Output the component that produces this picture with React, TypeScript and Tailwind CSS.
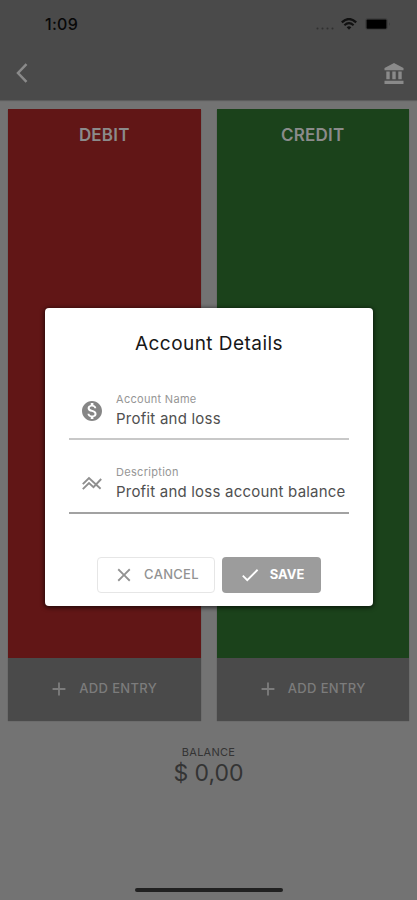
import { MdAdd, MdCheck, MdClose, MdMonetizationOn } from "react-icons/md";

const columns = [
	{ id: 1, title: "DEBIT", color: "bg-[#611616]" },
	{ id: 2, title: "CREDIT", color: "bg-[#1b421b]" },
];

const BankIcon = () => (
	<svg viewBox="0 0 19 21" className="w-5 h-[21px]" fill="currentColor">
		<path d="M1.800 8.600v7.600h3.400V8.600H1.800zm6 0v7.600h3.400V8.600H7.800zM0 21h19v-3.200H0V21zM13.800 8.600v7.600h3.400V8.600h-3.400zM9.500 0L0 5v2.200h19V5L9.500 0z" />
	</svg>
);

const ChartIcon = () => (
	<svg
		viewBox="0 0 20 16"
		className="w-5 h-4"
		fill="none"
		stroke="currentColor"
		strokeWidth="1.9"
	>
		<path d="M0.8 9.200L7 3L18.600 13.800" />
		<path d="M0.8 14.200L7 8L11.500 12.200L19.200 4" />
	</svg>
);

const StatusBar = () => (
	<div className="h-[46px] pl-[45px] pr-[26px] flex items-center justify-between text-[#080808]">
		<span className="text-[16px] font-medium leading-5 mt-px tracking-[0.3px]">
			1:09
		</span>
		<div className="flex items-center mt-[2px]">
			<svg viewBox="0 0 18 3" className="w-[18px] h-[3px] mt-2 mr-[7px]">
				<g fill="#303030">
					<circle cx="1.500" cy="1.500" r="1" />
					<circle cx="6.500" cy="1.500" r="1" />
					<circle cx="11.500" cy="1.500" r="1" />
					<circle cx="16.500" cy="1.500" r="1" />
				</g>
			</svg>
			<svg viewBox="0 0 16 12" className="w-4 h-3 mr-2" fill="none" stroke="#111">
				<path d="M0.8 4.400Q8 -2.400 15.200 4.400" strokeWidth="2.200" />
				<path d="M3.400 7.200Q8 3 12.600 7.200" strokeWidth="2.100" />
				<path d="M5.700 9.200Q8 7.200 10.300 9.200L8 11.800Z" fill="#111" stroke="none" />
			</svg>
			<svg viewBox="0 0 26 12" className="w-[26px] h-3">
				<rect x="0.5" y="0.5" width="22" height="11" rx="2.500" fill="none" stroke="#3f3f3f" />
				<rect x="1.500" y="1.500" width="20" height="9.200" rx="1" fill="#000" />
				<path d="M24 4.200Q25.500 6 24 8Z" fill="#353535" />
			</svg>
		</div>
	</div>
);

const App = () => {
	return (
		<div className="relative w-full h-[900px] bg-[#737373] font-['Inter','Liberation_Sans',sans-serif] overflow-hidden">
			{/* Header */}
			<header className="h-[100px] bg-[#4a4a4a] shadow-[0_1px_1px_rgba(0,0,0,0.2)]">
				<StatusBar />
				<div className="h-[54px] pl-4 pr-[13px] flex items-center justify-between text-[#8a8a8a]">
					<svg viewBox="0 0 12 20" className="w-3 h-5" fill="none" stroke="currentColor" strokeWidth="2.500">
						<path d="M10.500 1.200L2 10L10.500 18.800" />
					</svg>
					<BankIcon />
				</div>
			</header>

			{/* Debit and credit columns */}
			<main className="flex gap-4 px-2 pt-[9px]">
				{columns.map((column) => (
					<section
						key={column.id}
						className="flex-1 h-[611px] flex flex-col shadow-[0_1px_1px_rgba(0,0,0,0.35)]"
					>
						<div className={`h-[549px] pt-[14px] text-center ${column.color}`}>
							<h2 className="text-[17px] leading-6 font-semibold tracking-[0.2px] text-[#8b8b8b]">
								{column.title}
							</h2>
						</div>
						<button
							type="button"
							className="h-[62px] pr-[3px] bg-[#4a4a4a] flex items-center justify-center gap-[9px] text-[#7c7c7c] text-[13px] font-medium tracking-[0.35px]"
						>
							<MdAdd className="w-[22px] h-[22px]" />
							ADD ENTRY
						</button>
					</section>
				))}
			</main>

			{/* Balance */}
			<div className="mt-6 text-center text-[#343434]">
				<p className="text-[11px] leading-4 tracking-[0.25px]">BALANCE</p>
				<p className="text-[23px] leading-[27px]">$ 0,00</p>
			</div>

			{/* Home indicator */}
			<div className="absolute bottom-2 left-[135px] w-[148px] h-1 rounded-full bg-[#202020]" />

			{/* Account dialog */}
			<div className="absolute left-[45px] top-[308px] w-[328px] h-[298px] px-6 pt-6 rounded bg-white shadow-[0_1px_4px_1px_rgba(0,0,0,0.6)]">
				<h1 className="text-center text-[19px] leading-6 tracking-[0.45px] text-[#171717]">
					Account Details
				</h1>
				<div className="mt-[35px] h-[41px] flex items-start pl-[11px] border-[#c8c8c8] border-b-2 box-content pb-[6px]">
					<MdMonetizationOn className="w-6 h-6 mt-2 mr-3 text-[#868686]" />
					<div className="whitespace-nowrap">
						<p className="text-[11px] leading-4 tracking-[0.3px] text-[#969696]">
							Account Name
						</p>
						<p className="text-[15px] leading-[23px] tracking-[0.23px] text-[#505050]">
							Profit and loss
						</p>
					</div>
				</div>
				<div className="mt-6 h-[41px] flex items-start pl-[11px] border-[#a2a2a2] border-b-2 box-content pb-[7px]">
					<div className="w-6 mt-[11px] mr-3 flex justify-center text-[#8f8f8f]">
						<ChartIcon />
					</div>
					<div className="whitespace-nowrap">
						<p className="text-[11px] leading-4 tracking-[0.3px] text-[#969696]">
							Description
						</p>
						<p className="text-[15px] leading-[23px] tracking-[0.21px] text-[#505050]">
							Profit and loss account balance
						</p>
					</div>
				</div>
				<div className="mt-[43px] pl-7 flex gap-[7px] text-[13px]">
					<button
						type="button"
						className="w-[118px] h-9 pb-px rounded border border-[#e6e6e6] flex items-center justify-center gap-[9px] tracking-[0.3px] font-medium text-[#929292]"
					>
						<MdClose className="w-[22px] h-[22px]" />
						CANCEL
					</button>
					<button
						type="button"
						className="w-[99px] h-9 pb-px rounded bg-[#9c9c9c] flex items-center justify-center gap-[9px] text-white font-bold"
					>
						<MdCheck className="w-[22px] h-[22px]" />
						SAVE
					</button>
				</div>
			</div>
		</div>
	);
};

export default App;
